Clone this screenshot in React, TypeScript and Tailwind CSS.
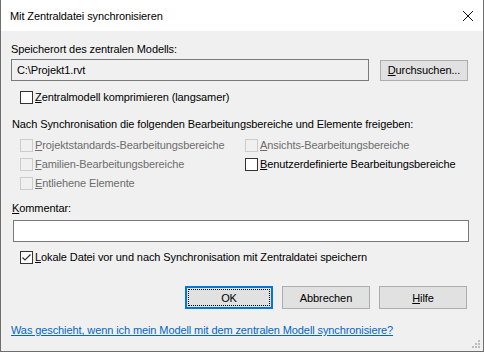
import { useState } from 'react'

function Box({ checked, disabled }: { checked?: boolean; disabled?: boolean }) {
  return (
    <span
      className={`w-[13px] h-[13px] shrink-0 border flex items-center justify-center ${
        disabled ? 'border-[#cccccc] bg-[#f0f0f0]' : 'border-[#333333] bg-white'
      }`}
    >
      {checked && (
        <svg width="11" height="11" viewBox="0 0 11 11">
          <path d="M1.5 5.5 L4 8 L9.5 2.5" fill="none" stroke="#333" strokeWidth="1.2" />
        </svg>
      )}
    </span>
  )
}

function Check({ hot, rest, checked, disabled, className = '' }: { hot: string; rest: string; checked?: boolean; disabled?: boolean; className?: string }) {
  return (
    <div className={`flex items-center gap-[2px] h-[16px] whitespace-nowrap ${className}`}>
      <Box checked={checked} disabled={disabled} />
      <span className={disabled ? 'text-[#6d6d6d]' : 'text-black'}>
        <u>{hot}</u>
        {rest}
      </span>
    </div>
  )
}

export default function App() {
  const [comment, setComment] = useState('')

  return (
    <div className="w-[484px] h-[352px] bg-[#f0f0f0] border-x border-b border-[#6e6e6e] flex flex-col text-[11px] leading-[16px] tracking-[-0.1px] font-['Liberation_Sans',Arial,sans-serif] text-black overflow-hidden">
      <div className="h-[31px] bg-white flex items-center justify-between pl-[9px] pr-[8px] shrink-0">
        <span>Mit Zentraldatei synchronisieren</span>
        <svg width="12" height="12" viewBox="0 0 12 12" className="mr-[1px]">
          <path d="M1 1 L11 11 M11 1 L1 11" stroke="#111" strokeWidth="1" />
        </svg>
      </div>

      <div className="flex flex-col px-[10px]">
        <div className="mt-[10px]">Speicherort des zentralen Modells:</div>
        <div className="mt-[2px] flex items-center">
          <div className="w-[358px] h-[22px] border border-[#7a7a7a] bg-[#f0f0f0] flex items-center pl-[5px]">
            C:\Projekt1.rvt
          </div>
          <button className="ml-[11px] w-[88px] h-[21px] bg-[#e1e1e1] border border-[#adadad] flex items-center justify-center">
            <span><u>D</u>urchsuchen...</span>
          </button>
        </div>
        <Check hot="Z" rest="entralmodell komprimieren (langsamer)" className="mt-[8px] ml-[9px]" />

        <div className="mt-[11px] pl-[1px] whitespace-nowrap">Nach Synchronisation die folgenden Bearbeitungsbereiche und Elemente freigeben:</div>
        <div className="mt-[5px] ml-[9px] grid grid-cols-[225px_1fr] gap-y-[3px]">
          <Check hot="P" rest="rojektstandards-Bearbeitungsbereiche" disabled />
          <Check hot="A" rest="nsichts-Bearbeitungsbereiche" disabled />
          <Check hot="F" rest="amilien-Bearbeitungsbereiche" disabled />
          <Check hot="B" rest="enutzerdefinierte Bearbeitungsbereiche" />
          <Check hot="E" rest="ntliehene Elemente" disabled />
        </div>

        <div className="mt-[9px] pl-[1px]"><u>K</u>ommentar:</div>
        <input
          value={comment}
          onChange={e => setComment(e.target.value)}
          className="mt-[4px] ml-[2px] w-[456px] h-[22px] border border-[#7a7a7a] bg-white outline-none px-[4px]"
        />
        <Check hot="L" rest="okale Datei vor und nach Synchronisation mit Zentraldatei speichern" checked className="mt-[7px] ml-[9px]" />

        <div className="mt-[21px] flex justify-end gap-[9px] pr-[6px]">
          <button className="w-[88px] h-[23px] bg-[#e1e1e1] border-2 border-[#0078d7] p-[1px]">
            <div className="w-full h-full border border-dotted border-black flex items-center justify-center">OK</div>
          </button>
          <button className="w-[88px] h-[23px] bg-[#e1e1e1] border border-[#adadad]">Abbrechen</button>
          <button className="w-[88px] h-[23px] bg-[#e1e1e1] border border-[#adadad]"><u>H</u>ilfe</button>
        </div>

        <div className="mt-[13px]">
          <a href="#" className="text-[#0066cc] underline whitespace-nowrap">
            Was geschieht, wenn ich mein Modell mit dem zentralen Modell synchronisiere?
          </a>
        </div>
      </div>
      <div className="flex-1 flex items-end justify-end pr-[2px] pb-[2px]">
        <svg width="9" height="9" viewBox="0 0 9 9">
          <rect x="6" y="0" width="2" height="2" fill="#bcbcbc" />
          <rect x="3" y="3" width="2" height="2" fill="#bcbcbc" />
          <rect x="6" y="3" width="2" height="2" fill="#bcbcbc" />
          <rect x="0" y="6" width="2" height="2" fill="#bcbcbc" />
          <rect x="3" y="6" width="2" height="2" fill="#bcbcbc" />
          <rect x="6" y="6" width="2" height="2" fill="#bcbcbc" />
        </svg>
      </div>
    </div>
  )
}
